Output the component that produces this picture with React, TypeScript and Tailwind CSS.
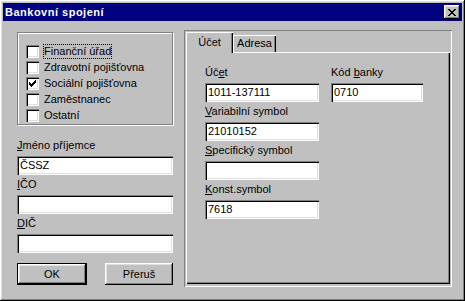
import React from "react";

const raised =
  "bg-[#c0c0c0] shadow-[inset_-1px_-1px_0_#000,inset_1px_1px_0_#fff,inset_-2px_-2px_0_#808080,inset_2px_2px_0_#dfdfdf]";
const sunken =
  "bg-white shadow-[inset_1px_1px_0_#808080,inset_2px_2px_0_#000,inset_-1px_-1px_0_#fff,inset_-2px_-2px_0_#dfdfdf]";

// tiny pixel-art helper, rows of "x" and "."
function Pixels({ rows, className }: { rows: string[]; className?: string }) {
  const w = rows[0].length;
  const h = rows.length;
  return (
    <svg width={w} height={h} viewBox={`0 0 ${w} ${h}`} shapeRendering="crispEdges" className={className}>
      {rows.flatMap((r, y) =>
        r.split("").map((c, x) => (c === "x" ? <rect key={`${x}-${y}`} x={x} y={y} width={1} height={1} fill="#000" /> : null))
      )}
    </svg>
  );
}

const closeX = ["xx....xx", ".xx..xx.", "..xxxx..", "...xx...", "..xxxx..", ".xx..xx.", "xx....xx"];
const check = ["......x", ".....xx", "x...xxx", "xx.xxx.", "xxxxx..", ".xxx...", "..x...."];

function Check({ label, checked, focus }: { label: string; checked?: boolean; focus?: boolean }) {
  return (
    <div className="flex items-start h-[16px]">
      <div className={`w-[13px] h-[13px] shrink-0 flex items-center justify-center ${sunken}`}>
        {checked && <Pixels rows={check} />}
      </div>
      <span
        className={`ml-[4px] -mt-[1px] border leading-[13px] whitespace-nowrap ${
          focus ? "border-dotted border-black" : "border-transparent"
        }`}
      >
        {label}
      </span>
    </div>
  );
}

function Label({ children, className = "" }: { children: React.ReactNode; className?: string }) {
  return <div className={`leading-[13px] h-[13px] whitespace-nowrap ${className}`}>{children}</div>;
}

function Field({ value, className = "" }: { value?: string; className?: string }) {
  return <div className={`h-[19px] mt-[4px] flex items-center pl-[3px] ${sunken} ${className}`}>{value}</div>;
}

export default function App() {
  return (
    <div
      className={`w-[465px] h-[301px] p-[3px] flex flex-col text-[11px] text-black font-['Liberation_Sans',Arial,sans-serif] ${raised}`}
    >
      {/* title bar */}
      <div className="h-[18px] bg-[#000080] flex items-center justify-between pl-[2px] pr-[2px]">
        <span className="text-white font-bold tracking-[0.5px]">Bankovní spojení</span>
        <div className={`w-[16px] h-[14px] flex items-center justify-center ${raised}`}>
          <Pixels rows={closeX} />
        </div>
      </div>

      <div className="flex items-start">
        {/* left column */}
        <div className="ml-[14px] mt-[11px] w-[156px] flex flex-col">
          <div className="h-[93px] border border-[#808080] shadow-[inset_1px_1px_0_#fff,1px_1px_0_#fff] pt-[12px] pl-[8px]">
            <Check label="Finanční úřad" focus />
            <Check label="Zdravotní pojišťovna" />
            <Check label="Sociální pojišťovna" checked />
            <Check label="Zaměstnanec" />
            <Check label="Ostatní" />
          </div>

          <Label className="mt-[14px]">
            <u className="underline">J</u>méno příjemce
          </Label>
          <Field value="ČSSZ" />
          <Label className="mt-[3px]">
            <u className="underline">I</u>ČO
          </Label>
          <Field />
          <Label className="mt-[3px]">
            <u className="underline">D</u>IČ
          </Label>
          <Field />

          <div className="mt-[10px] flex justify-between">
            <div className="w-[70px] h-[22px] border border-black">
              <div className={`w-full h-full flex items-center justify-center ${raised}`}>OK</div>
            </div>
            <div className={`w-[68px] h-[22px] flex items-center justify-center ${raised}`}>Přeruš</div>
          </div>
        </div>

        {/* right: tab control inside sunken frame */}
        <div className="ml-[11px] mt-[9px] w-[268px] h-[257px] flex flex-col pt-[2px] pl-[2px] pr-[2px] pb-[3px] shadow-[inset_1px_1px_0_#808080,inset_-1px_-1px_0_#fff]">
          <div className="h-[20px] flex items-end shrink-0">
            <div className="relative z-10 w-[47px] h-[21px] -mb-[1px] bg-[#c0c0c0] flex items-center justify-center pb-[1px] shadow-[inset_1px_1px_0_#fff,inset_-1px_0_0_#000,inset_-2px_0_0_#808080]">
              Účet
            </div>
            <div className="w-[43px] h-[17px] flex items-center justify-center shadow-[inset_1px_1px_0_#fff,inset_-1px_0_0_#000,inset_-2px_0_0_#808080]">
              Adresa
            </div>
          </div>
          <div className="flex-1 pl-[19px] pt-[14px] shadow-[inset_1px_1px_0_#fff,inset_-1px_-1px_0_#000,inset_-2px_-2px_0_#808080]">
            <div className="flex gap-[12px]">
              <div className="w-[114px]">
                <Label>
                  Úč<u className="underline">e</u>t
                </Label>
                <Field value="1011-137111" />
              </div>
              <div className="w-[92px]">
                <Label>
                  Kód <u className="underline">b</u>anky
                </Label>
                <Field value="0710" />
              </div>
            </div>
            <div className="w-[114px]">
              <Label className="mt-[3px]">
                <u className="underline">V</u>ariabilní symbol
              </Label>
              <Field value="21010152" />
              <Label className="mt-[3px]">
                <u className="underline">S</u>pecifický symbol
              </Label>
              <Field />
              <Label className="mt-[3px]">
                <u className="underline">K</u>onst.symbol
              </Label>
              <Field value="7618" />
            </div>
          </div>
        </div>
      </div>
    </div>
  );
}
